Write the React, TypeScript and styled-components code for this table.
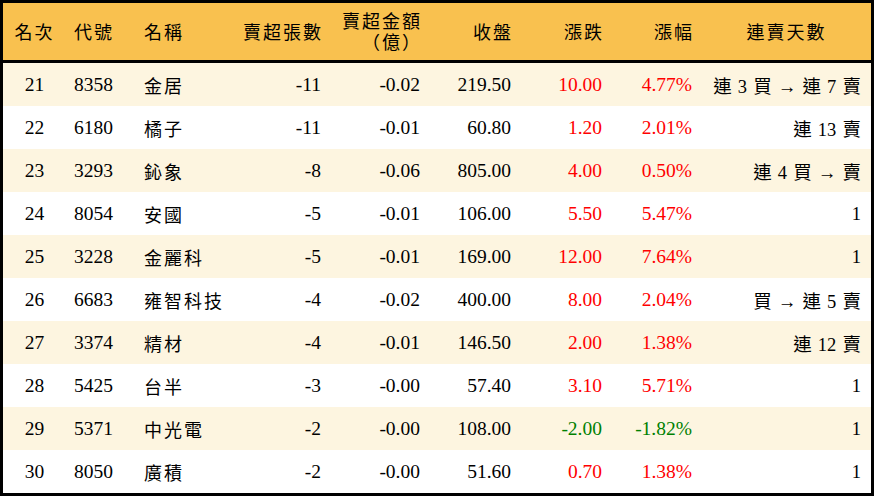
import React from 'react';
import styled, { createGlobalStyle } from 'styled-components';

const GlobalStyle = createGlobalStyle`
  html, body {
    margin: 0;
    padding: 0;
    background: #ffffff;
  }
  * {
    box-sizing: border-box;
  }
`;

type Row = {
  rank: number;
  code: string;
  name: string;
  lots: number;
  amount: string;
  close: string;
  change: string;
  pct: string;
  streak: string;
};

const ROWS: Row[] = [
  { rank: 21, code: '8358', name: '金居', lots: -11, amount: '-0.02', close: '219.50', change: '10.00', pct: '4.77%', streak: '連 3 買 → 連 7 賣' },
  { rank: 22, code: '6180', name: '橘子', lots: -11, amount: '-0.01', close: '60.80', change: '1.20', pct: '2.01%', streak: '連 13 賣' },
  { rank: 23, code: '3293', name: '鈊象', lots: -8, amount: '-0.06', close: '805.00', change: '4.00', pct: '0.50%', streak: '連 4 買 → 賣' },
  { rank: 24, code: '8054', name: '安國', lots: -5, amount: '-0.01', close: '106.00', change: '5.50', pct: '5.47%', streak: '1' },
  { rank: 25, code: '3228', name: '金麗科', lots: -5, amount: '-0.01', close: '169.00', change: '12.00', pct: '7.64%', streak: '1' },
  { rank: 26, code: '6683', name: '雍智科技', lots: -4, amount: '-0.02', close: '400.00', change: '8.00', pct: '2.04%', streak: '買 → 連 5 賣' },
  { rank: 27, code: '3374', name: '精材', lots: -4, amount: '-0.01', close: '146.50', change: '2.00', pct: '1.38%', streak: '連 12 賣' },
  { rank: 28, code: '5425', name: '台半', lots: -3, amount: '-0.00', close: '57.40', change: '3.10', pct: '5.71%', streak: '1' },
  { rank: 29, code: '5371', name: '中光電', lots: -2, amount: '-0.00', close: '108.00', change: '-2.00', pct: '-1.82%', streak: '1' },
  { rank: 30, code: '8050', name: '廣積', lots: -2, amount: '-0.00', close: '51.60', change: '0.70', pct: '1.38%', streak: '1' },
];

const COLS = [63, 70, 95, 100, 99, 91, 91, 90, 169];

const Frame = styled.div`
  width: 874px;
  height: 496px;
  border: 3px solid #000;
  overflow: hidden;
  font-family: "Liberation Serif", "Noto Sans CJK TC", serif;
  color: #000;
`;

const Table = styled.table`
  width: 100%;
  table-layout: fixed;
  border-collapse: separate;
  border-spacing: 0;
`;

const Head = styled.th<{ $align: 'left' | 'center' | 'right' }>`
  height: 60px;
  background: #f9c14f;
  border-bottom: 3px solid #000;
  font-weight: normal;
  font-size: 18px;
  line-height: 21px;
  letter-spacing: 2px;
  text-align: ${(p) => p.$align};
  padding: 3px ${(p) => (p.$align === 'right' ? '8px' : '0')} 0 ${(p) => (p.$align === 'left' ? '8px' : '0')};
`;

const BodyRow = styled.tr<{ $shade: boolean }>`
  background: ${(p) => (p.$shade ? '#fdf5e0' : '#ffffff')};
`;

const Cell = styled.td<{ $align: 'left' | 'center' | 'right'; $tone?: 'up' | 'down' }>`
  height: 43px;
  padding: 0 ${(p) => (p.$align === 'right' ? '10px' : '0')} 0 ${(p) => (p.$align === 'left' ? '8px' : '0')};
  text-align: ${(p) => p.$align};
  font-size: 19.5px;
  white-space: nowrap;
  color: ${(p) => (p.$tone === 'up' ? '#ff0000' : p.$tone === 'down' ? '#008000' : '#000')};
`;

const Name = styled.span`
  font-size: 18px;
  letter-spacing: 2px;
`;

const Streak = styled.span`
  font-size: 18.5px;
  word-spacing: 1.5px;
`;

const tone = (v: string): 'up' | 'down' => (v.startsWith('-') ? 'down' : 'up');

const App = () => {
  return (
    <>
      <GlobalStyle />
      <Frame>
        <Table>
          <colgroup>
            {COLS.map((w, i) => (
              <col key={i} style={{ width: w }} />
            ))}
          </colgroup>
          <thead>
            <tr>
              <Head $align="center">名次</Head>
              <Head $align="left">代號</Head>
              <Head $align="left">名稱</Head>
              <Head $align="right">賣超張數</Head>
              <Head $align="right">
                賣超金額
                <br />
                （億）
              </Head>
              <Head $align="right">收盤</Head>
              <Head $align="right">漲跌</Head>
              <Head $align="right">漲幅</Head>
              <Head $align="center">連賣天數</Head>
            </tr>
          </thead>
          <tbody>
            {ROWS.map((r, i) => (
              <BodyRow key={r.rank} $shade={i % 2 === 0}>
                <Cell $align="center">{r.rank}</Cell>
                <Cell $align="left">{r.code}</Cell>
                <Cell $align="left">
                  <Name>{r.name}</Name>
                </Cell>
                <Cell $align="right">{r.lots}</Cell>
                <Cell $align="right">{r.amount}</Cell>
                <Cell $align="right">{r.close}</Cell>
                <Cell $align="right" $tone={tone(r.change)}>{r.change}</Cell>
                <Cell $align="right" $tone={tone(r.pct)}>{r.pct}</Cell>
                <Cell $align="right">
                  <Streak>{r.streak}</Streak>
                </Cell>
              </BodyRow>
            ))}
          </tbody>
        </Table>
      </Frame>
    </>
  );
};

export default App;
